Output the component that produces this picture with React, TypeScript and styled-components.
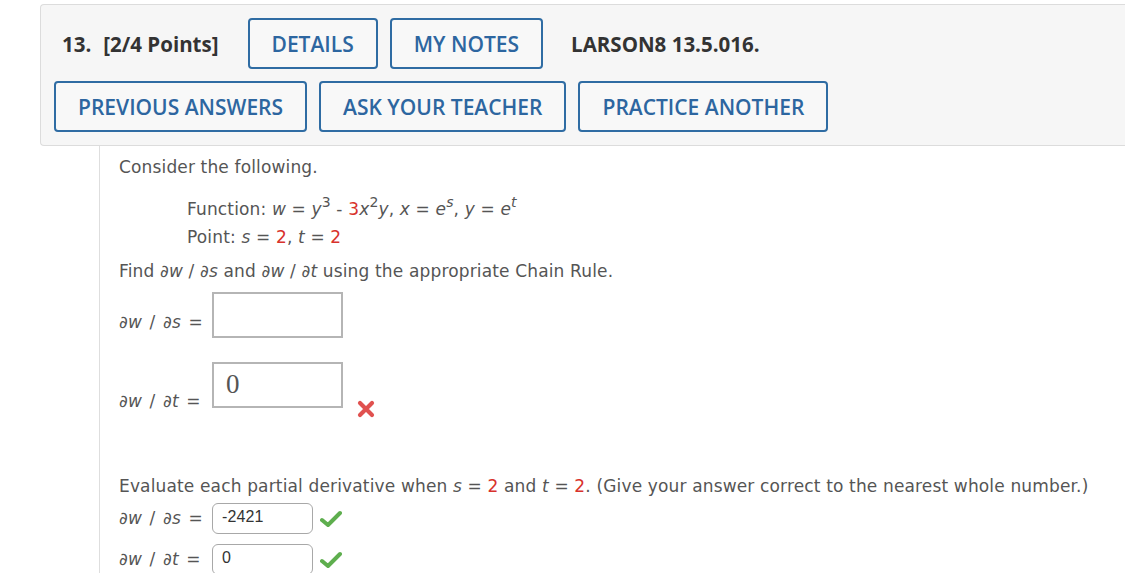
import React from 'react';
import styled, { createGlobalStyle } from 'styled-components';

const GlobalStyle = createGlobalStyle`
  body {
    margin: 0;
    background: #ffffff;
  }
`;

const Page = styled.div`
  padding: 4px 0 0 40px;
  width: 1125px;
  box-sizing: border-box;
  height: 573px;
  overflow: hidden;
`;

const Panel = styled.div`
  background: #f6f6f6;
  border: 1px solid #dcdcdc;
  border-right: none;
  border-radius: 4px 0 0 4px;
  padding: 13px 0 13px 13px;
  display: flex;
  flex-direction: column;
  gap: 12px;
  font-family: 'Open Sans', 'Liberation Sans', sans-serif;
`;

const HeaderRow = styled.div`
  display: flex;
  align-items: center;
  gap: 12px;
`;

const Title = styled.div<{ $lead?: boolean }>`
  font-size: 20.5px;
  font-weight: 700;
  color: #333333;
  margin-left: ${(p) => (p.$lead ? '8px' : '16px')};
  margin-right: ${(p) => (p.$lead ? '17px' : '0')};
  display: flex;
  gap: 12px;
`;

const Button = styled.div`
  height: 51px;
  box-sizing: border-box;
  padding: 0 22px;
  display: flex;
  align-items: center;
  border: 2px solid #2f6ca3;
  border-radius: 4px;
  color: #2d66a0;
  font-size: 21px;
  font-weight: 600;
  background: #f8f8f8;
`;

const Content = styled.div`
  margin-left: 59px;
  border-left: 1px solid #dedede;
  padding-left: 19px;
  height: 440px;
  font-family: 'DejaVu Sans', Verdana, sans-serif;
  font-size: 17px;
  letter-spacing: 0.15px;
  color: #555555;
  display: flex;
  flex-direction: column;
`;

const Line = styled.div<{ $top: number; $indent?: boolean }>`
  line-height: 24px;
  margin-top: ${(p) => p.$top}px;
  margin-left: ${(p) => (p.$indent ? '68px' : '0')};
  white-space: nowrap;
`;

const V = styled.i`
  font-style: italic;
`;

const Red = styled.span`
  color: #d8322c;
`;

const Sup = styled.sup`
  font-size: 14px;
  vertical-align: 8px;
  line-height: 0;
`;

const AnswerRow = styled.div<{ $top: number }>`
  display: flex;
  align-items: flex-start;
  margin-top: ${(p) => p.$top}px;
`;

const Label = styled.div<{ $drop: number }>`
  width: 93px;
  line-height: 20px;
  word-spacing: 2px;
  margin-top: ${(p) => p.$drop}px;
  white-space: nowrap;
`;

const BigInput = styled.div`
  width: 131px;
  height: 46px;
  box-sizing: border-box;
  border: 2px solid #b5b5b5;
  background: #fff;
  font-family: 'Liberation Serif', 'Times New Roman', serif;
  font-size: 27px;
  color: #555;
  padding: 5px 0 0 12px;
`;

const SmallInput = styled.div`
  width: 101px;
  height: 31px;
  box-sizing: border-box;
  border: 1px solid #a8a8a8;
  border-radius: 6px;
  background: #fff;
  font-family: 'Liberation Sans', Arial, sans-serif;
  font-size: 16px;
  color: #333;
  padding: 4px 0 0 9px;
`;

const Mark = styled.svg<{ $top: number; $left: number }>`
  margin-top: ${(p) => p.$top}px;
  margin-left: ${(p) => p.$left}px;
  flex-shrink: 0;
`;

const Cross = () => (
  <Mark $top={38} $left={14} width="18" height="18" viewBox="0 0 18 18">
    <path d="M3 3 L15 15 M15 3 L3 15" stroke="#e0514f" strokeWidth="4.2" strokeLinecap="round" />
  </Mark>
);

const Check = () => (
  <Mark $top={7} $left={7} width="22" height="18" viewBox="0 0 22 18">
    <path d="M2 10 L8 15 L20 3" stroke="#5eae4e" strokeWidth="4" fill="none" strokeLinecap="round" strokeLinejoin="round" />
  </Mark>
);

const Deriv = ({ v }: { v: string }) => (
  <>
    ∂<V>w</V> / ∂<V>{v}</V> =
  </>
);

export default function App() {
  return (
    <Page>
      <GlobalStyle />
      <Panel>
        <HeaderRow>
          <Title $lead>
            <span>13.</span>
            <span>[2/4 Points]</span>
          </Title>
          <Button>DETAILS</Button>
          <Button>MY NOTES</Button>
          <Title>LARSON8 13.5.016.</Title>
        </HeaderRow>
        <HeaderRow>
          <Button>PREVIOUS ANSWERS</Button>
          <Button>ASK YOUR TEACHER</Button>
          <Button>PRACTICE ANOTHER</Button>
        </HeaderRow>
      </Panel>
      <Content>
        <Line $top={9}>Consider the following.</Line>
        <Line $top={18} $indent>
          Function: <V>w</V> = <V>y</V>
          <Sup>3</Sup> - <Red>3</Red>
          <V>x</V>
          <Sup>2</Sup>
          <V>y</V>, <V>x</V> = <V>e</V>
          <Sup>
            <V>s</V>
          </Sup>
          , <V>y</V> = <V>e</V>
          <Sup>
            <V>t</V>
          </Sup>
        </Line>
        <Line $top={4} $indent>
          Point: <V>s</V> = <Red>2</Red>, <V>t</V> = <Red>2</Red>
        </Line>
        <Line $top={10}>
          Find ∂<V>w</V> / ∂<V>s</V> and ∂<V>w</V> / ∂<V>t</V> using the appropriate Chain Rule.
        </Line>
        <AnswerRow $top={9}>
          <Label $drop={20}>
            <Deriv v="s" />
          </Label>
          <BigInput />
        </AnswerRow>
        <AnswerRow $top={24}>
          <Label $drop={29}>
            <Deriv v="t" />
          </Label>
          <BigInput>0</BigInput>
          <Cross />
        </AnswerRow>
        <Line $top={56}>
          Evaluate each partial derivative when <V>s</V> = <Red>2</Red> and <V>t</V> = <Red>2</Red>. (Give
          your answer correct to the nearest whole number.)
        </Line>
        <AnswerRow $top={5}>
          <Label $drop={5}>
            <Deriv v="s" />
          </Label>
          <SmallInput>-2421</SmallInput>
          <Check />
        </AnswerRow>
        <AnswerRow $top={10}>
          <Label $drop={5}>
            <Deriv v="t" />
          </Label>
          <SmallInput>0</SmallInput>
          <Check />
        </AnswerRow>
      </Content>
    </Page>
  );
}
